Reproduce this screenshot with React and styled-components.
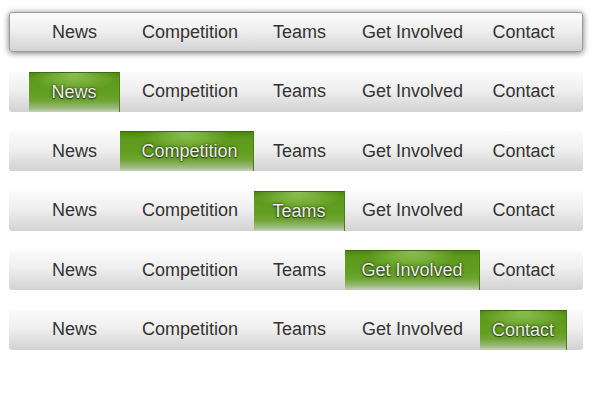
import styled, { createGlobalStyle, css } from "styled-components";

const items = [
  { label: "News", width: 91 },
  { label: "Competition", width: 134, shift: 6 },
  { label: "Teams", width: 91 },
  { label: "Get Involved", width: 135 },
  { label: "Contact", width: 87 },
];

// first bar shows the hover look, the rest show each item as active
const bars = [
  { raised: true, active: -1 },
  { active: 0 },
  { active: 1 },
  { active: 2 },
  { active: 3 },
  { active: 4 },
];

export default function App() {
  return (
    <>
      <GlobalStyle />
      <StyledPage>
        {bars.map((bar, i) => (
          <StyledBar key={i} $raised={bar.raised}>
            {items.map((item, index) => (
              <StyledItem
                key={item.label}
                $width={item.width}
                $shift={item.shift}
                $active={bar.active === index}
              >
                {item.label}
              </StyledItem>
            ))}
          </StyledBar>
        ))}
      </StyledPage>
    </>
  );
}

const GlobalStyle = createGlobalStyle`
  body {
    margin: 0;
    background: #ffffff;
    font-family: "Liberation Sans", Arial, sans-serif;
  }
`;

const StyledPage = styled.div`
  display: flex;
  flex-direction: column;
  gap: 19.6px;
  padding: 12px 11px 0 9px;
`;

const StyledBar = styled.nav`
  display: flex;
  align-items: stretch;
  height: 40px;
  box-sizing: border-box;
  padding-left: 20px;
  border-radius: 3px;
  background: linear-gradient(to bottom, #fbfbfb 0%, #efefef 45%, #d2d2d2 100%);
  overflow: hidden;

  ${(p) =>
    p.$raised &&
    css`
      border: 1px solid #9a9a9a;
      padding-left: 19px;
      box-shadow: 0 1px 6px rgba(0, 0, 0, 0.55);
    `}
`;

const StyledItem = styled.a`
  display: flex;
  align-items: center;
  justify-content: center;
  box-sizing: border-box;
  width: ${(p) => p.$width}px;
  padding-left: ${(p) => p.$shift || 0}px;
  font-size: 18px;
  color: #333333;
  cursor: pointer;

  ${(p) =>
    p.$active &&
    css`
      color: #ececec;
      text-shadow: 0 0 3px rgba(0, 0, 0, 0.8), 0 1px 1px rgba(0, 0, 0, 0.5);
      border-top: 1px solid #3c6b0b;
      border-right: 1px solid #4b7a1a;
      background: radial-gradient(
          ellipse 44px 20px at 50% 0,
          rgba(168, 214, 110, 0.7),
          rgba(168, 214, 110, 0)
        ),
        linear-gradient(
          to bottom,
          #4c8610 0%,
          #5d9a1c 15%,
          #62a020 55%,
          #70a535 72%,
          #9cba7e 90%,
          #c6d0bd 100%
        );
    `}
`;
